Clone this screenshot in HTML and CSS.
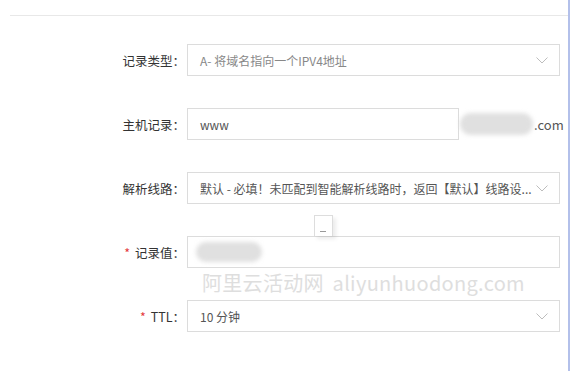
FILE: index.html
```html
<!DOCTYPE html>
<html lang="zh-CN">
<head>
    <meta charset="UTF-8">
    <title>添加记录</title>
    <link rel="stylesheet" href="styles.css">
</head>
<body>
    <div class="panel">
        <div class="panel-head"></div>

        <form class="record-form">
            <div class="form-row">
                <label class="form-label">记录类型：</label>
                <div class="select">
                    <span class="select-text">A- 将域名指向一个IPV4地址</span>
                    <svg class="chevron" width="12" height="7" viewBox="0 0 12 7"><polyline points="0.5,0.5 6,6 11.5,0.5" /></svg>
                </div>
            </div>

            <div class="form-row">
                <label class="form-label">主机记录：</label>
                <div class="input input-short">
                    <span class="input-text">www</span>
                </div>
                <span class="suffix"><span class="blur blur-domain"></span>.com</span>
            </div>

            <div class="form-row">
                <label class="form-label">解析线路：</label>
                <div class="select">
                    <span class="select-text dark">默认 - 必填！未匹配到智能解析线路时，返回【默认】线路设...</span>
                    <svg class="chevron" width="12" height="7" viewBox="0 0 12 7"><polyline points="0.5,0.5 6,6 11.5,0.5" /></svg>
                </div>
            </div>

            <div class="form-row">
                <label class="form-label"><i class="req">*</i>记录值：</label>
                <div class="input">
                    <span class="blur blur-value"></span>
                </div>
                <div class="mini-tip"><span></span></div>
            </div>

            <div class="form-row">
                <label class="form-label"><i class="req">*</i>TTL：</label>
                <div class="select">
                    <span class="select-text dark">10 分钟</span>
                    <svg class="chevron" width="12" height="7" viewBox="0 0 12 7"><polyline points="0.5,0.5 6,6 11.5,0.5" /></svg>
                </div>
            </div>

            <div class="watermark">阿里云活动网 aliyunhuodong.com</div>
        </form>
    </div>
</body>
</html>
```

FILE: styles.css
```css
* {
    margin: 0;
    padding: 0;
    box-sizing: border-box;
}
body {
    font-family: "Noto Sans CJK SC", "Microsoft YaHei", sans-serif;
    font-size: 12px;
    color: #333;
    background: #fff;
    width: 572px;
    height: 371px;
    overflow: hidden;
}
.panel {
    width: 570px;
    height: 371px;
    border-right: 2px solid #b3c0ea;
    padding-top: 15px;
}
.panel-head {
    height: 1px;
    margin-left: 10px;
    background: #e8e8e8;
}
.record-form {
    position: relative;
    padding-top: 28px;
}
.form-row {
    position: relative;
    display: flex;
    align-items: center;
    height: 32px;
    margin-bottom: 32px;
}
.form-label {
    width: 185px;
    text-align: right;
    margin-right: 2px;
    color: #333;
    font-size: 12.5px;
    white-space: nowrap;
}
.req {
    font-style: normal;
    color: #e4393c;
    margin-right: 5px;
}
.select,
.input {
    position: relative;
    display: flex;
    align-items: center;
    width: 373px;
    height: 32px;
    border: 1px solid #dcdcdc;
    background: #fff;
    padding: 0 12px;
}
.input-short {
    width: 272px;
}
.select-text,
.input-text {
    color: #888;
    white-space: nowrap;
}
.select-text.dark,
.input-text {
    color: #555;
}
.chevron {
    position: absolute;
    right: 11px;
    top: 12px;
    fill: none;
    stroke: #bdbdbd;
    stroke-width: 1;
}
.suffix {
    display: flex;
    align-items: center;
    color: #555;
    font-size: 13px;
    margin-left: 1px;
}
.blur {
    display: inline-block;
    background: #e0e0e0;
    border-radius: 11px;
    filter: blur(2px);
}
.blur-domain {
    width: 73px;
    height: 22px;
    margin-right: 1px;
}
.blur-value {
    width: 66px;
    height: 20px;
    margin-left: -4px;
}
.mini-tip {
    position: absolute;
    left: 314px;
    top: -21px;
    width: 19px;
    height: 21px;
    border: 1px solid #ddd;
    border-bottom: none;
    background: #fff;
    box-shadow: 3px 3px 4px rgba(0, 0, 0, 0.08);
}
.mini-tip span {
    position: absolute;
    left: 5px;
    bottom: 4px;
    width: 6px;
    height: 1px;
    background: #999;
}
.watermark {
    position: absolute;
    left: 202px;
    top: 252px;
    font-size: 20px;
    letter-spacing: 0.3px;
    word-spacing: 4px;
    color: #dedede;
    white-space: nowrap;
    pointer-events: none;
}
```
